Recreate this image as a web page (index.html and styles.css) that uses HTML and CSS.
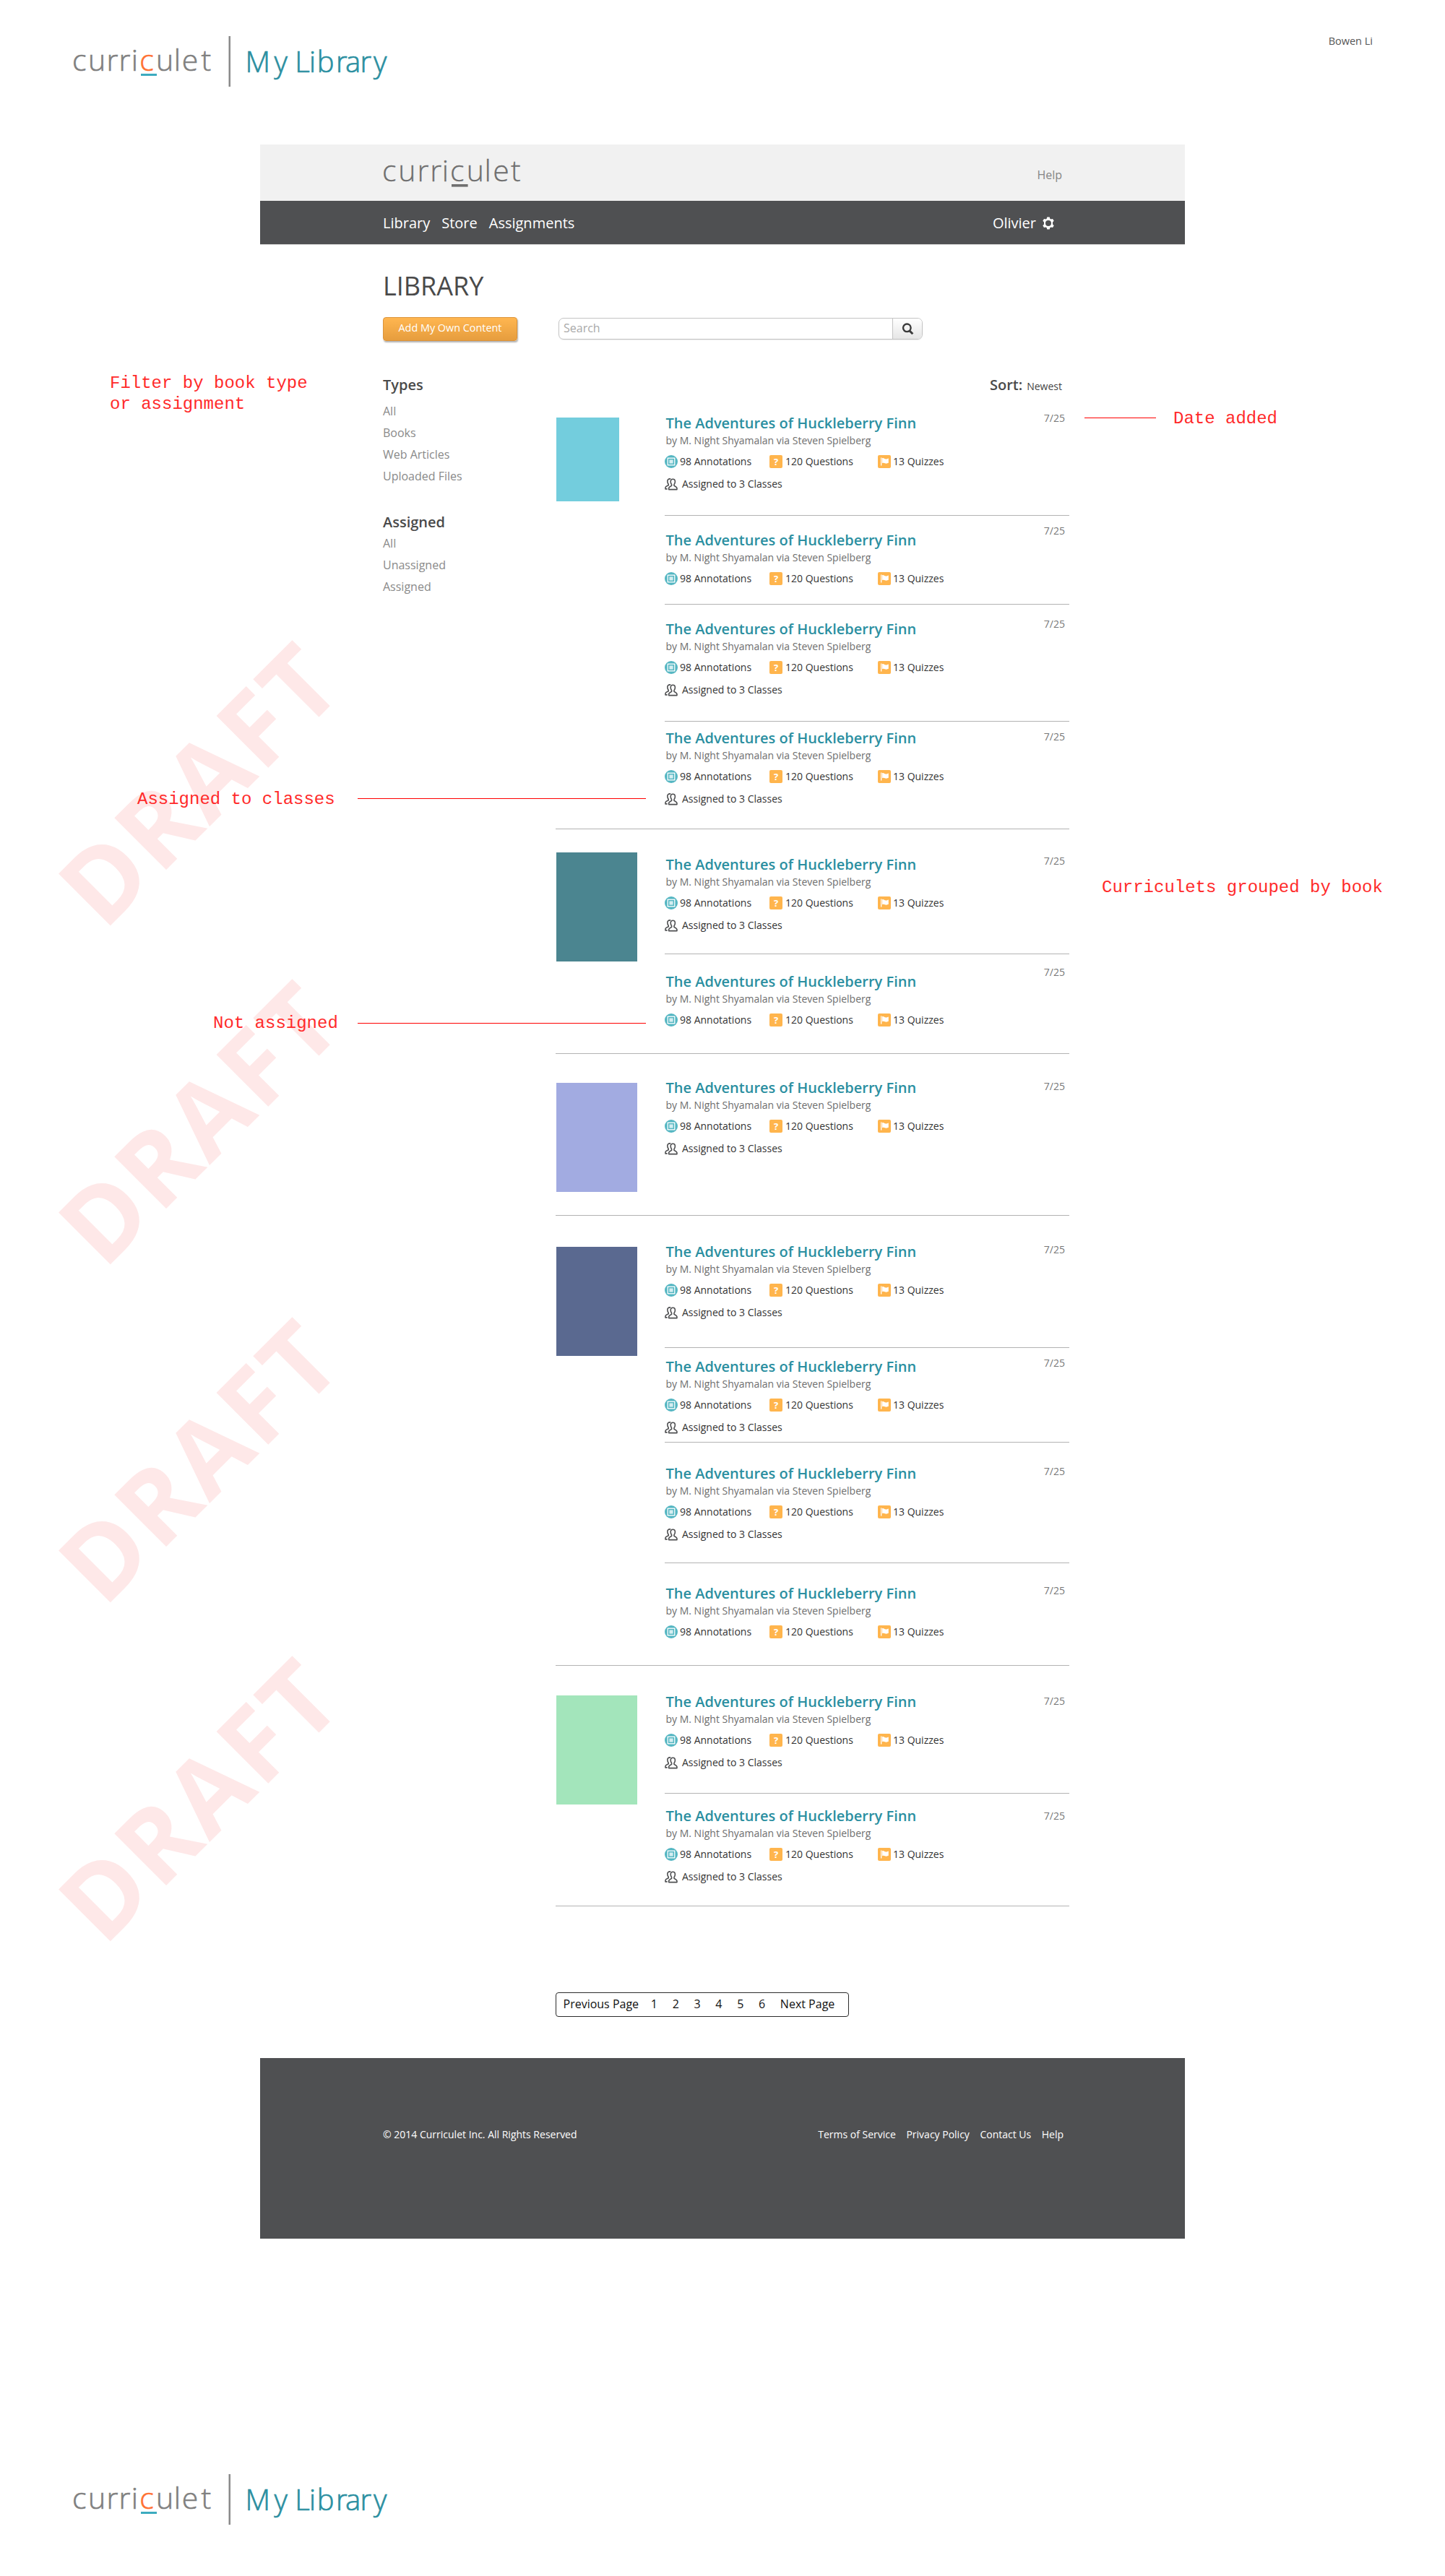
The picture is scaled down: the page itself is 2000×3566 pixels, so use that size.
FILE: index.html
```html
<!DOCTYPE html>
<html lang="en">
<head>
<meta charset="utf-8">
<title>Curriculet – My Library</title>
<link rel="stylesheet" href="styles.css">
</head>
<body>
<svg class="sprite" width="0" height="0" aria-hidden="true">
  <symbol id="note" viewBox="0 0 18 18"><circle cx="9" cy="9" r="9" fill="#54b6c2"/><rect x="4.2" y="4.2" width="9.6" height="9.6" fill="none" stroke="#fff" stroke-width="1.3"/><rect x="6.4" y="6.4" width="5.2" height="5.2" fill="#d5eef1"/></symbol>
  <symbol id="flag" viewBox="0 0 18 18"><rect width="18" height="18" rx="2" fill="#ffb54d"/><path d="M4 3.6h1.3v11H4zM6 4.3c1.9-1 3.200 1.300 5.200 1.200 1.300 0 2.300-.5 3.600-1v6.300c-1.500.7-3.300 1.200-5 .5-1.300-.6-2.400-.8-3.800-.1z" fill="#fff"/></symbol>
  <symbol id="people" viewBox="0 0 18 17"><g fill="none" stroke="#4e4f51" stroke-width="1.6" stroke-linejoin="round"><path d="M11.300 1.200c2 0 3.100 1.500 3.100 3.600 0 1.900-.6 3-1.400 4v1.500c1.800.9 3.600 1.500 3.900 3.200l.1 2.100H5.600l.1-2.100c.3-1.700 2.100-2.300 3.900-3.200V8.800c-.8-1-1.400-2.100-1.400-4 0-2.100 1.100-3.600 3.100-3.600z"/><path d="M8.300 1.100C5.400.300 3.700 2 3.800 4.300c0 1.700.5 2.900 1.400 3.900v1.500C3.300 10.600 1.300 11 1 12.900v2h2.600"/></g></symbol>
  <symbol id="gear" viewBox="0 0 18 18"><path fill="#fff" fill-rule="evenodd" d="M7.300.5h3.400l.6 2.300 1.300.8 2.400-.7 1.700 2.900-1.700 1.700v3l1.700 1.700-1.700 2.900-2.400-.7-1.300.8-.6 2.300H7.300l-.6-2.300-1.300-.8-2.400.7-1.700-2.900L3 10.500v-3L1.300 5.800 3 2.900l2.400.7 1.300-.8zM9 5a4 4 0 1 0 0 8 4 4 0 0 0 0-8z"/></symbol>
</svg>

<header class="brand">
  <svg class="brand-logo" width="460" height="80" viewBox="0 0 460 80">
    <text class="word" y="53" x="0 22 47.500 64.500 81.800 93.200 116 140.800 151.800 178.500">curri<tspan class="accent">c</tspan>ulet</text>
    <rect x="95" y="57" width="22" height="3" fill="#3cabbf"/>
    <rect x="216.500" y="5" width="2.500" height="70" fill="#8a8a8a"/>
    <text class="section" y="54.700" x="239.500 279.500 302 308.300 328 338.700 365 378 398.500 417">My Library</text>
  </svg>
  <span class="author">Bowen Li</span>
</header>

<div class="app">
  <div class="topbar">
    <svg class="app-logo" width="200" height="50" viewBox="0 0 200 50">
      <text class="word" y="36" x="-1 21.300 47.500 65.200 81.800 93 115.700 140.500 152.300 176.900">curriculet</text>
      <rect x="95" y="40" width="22.600" height="3.600" fill="#6f6f6f"/>
    </svg>
    <a class="help">Help</a>
  </div>
  <nav class="nav">
    <div class="nav-links"><a>Library</a><a>Store</a><a>Assignments</a></div>
    <div class="user">Olivier <svg width="18" height="18"><use href="#gear"/></svg></div>
  </nav>

  <main class="content">
    <h1>LIBRARY</h1>
    <div class="tools">
      <button class="add">Add My Own Content</button>
      <div class="search"><span class="search-field">Search</span><span class="search-btn"><svg width="17" height="17" viewBox="0 0 17 17" fill="none" stroke="#3b3b3b"><circle cx="7.300" cy="6.800" r="5.300" stroke-width="2.400"/><path d="M11 11l4.300 4.300" stroke-width="3"/></svg></span></div>
    </div>
    <div class="columns">
      <aside class="filters">
        <h2>Types</h2>
        <ul><li>All</li><li>Books</li><li>Web Articles</li><li>Uploaded Files</li></ul>
        <h2 class="second">Assigned</h2>
        <ul class="tight"><li>All</li><li>Unassigned</li><li>Assigned</li></ul>
      </aside>
      <div class="results">
        <div class="sort"><b>Sort:</b><span>Newest</span></div>

        <section class="group g1"><div class="cover"></div><div class="entries">
          <article class="entry e1"><div class="info"><h3>The Adventures of Huckleberry Finn</h3><p class="by">by M. Night Shyamalan via Steven Spielberg</p><div class="stats"><span><svg><use href="#note"/></svg>98 Annotations</span><span><i class="q">?</i>120 Questions</span><span><svg><use href="#flag"/></svg>13 Quizzes</span></div><p class="classes"><svg><use href="#people"/></svg>Assigned to 3 Classes</p></div><time>7/25</time></article>
          <article class="entry e2"><div class="info"><h3>The Adventures of Huckleberry Finn</h3><p class="by">by M. Night Shyamalan via Steven Spielberg</p><div class="stats"><span><svg><use href="#note"/></svg>98 Annotations</span><span><i class="q">?</i>120 Questions</span><span><svg><use href="#flag"/></svg>13 Quizzes</span></div></div><time>7/25</time></article>
          <article class="entry e3"><div class="info"><h3>The Adventures of Huckleberry Finn</h3><p class="by">by M. Night Shyamalan via Steven Spielberg</p><div class="stats"><span><svg><use href="#note"/></svg>98 Annotations</span><span><i class="q">?</i>120 Questions</span><span><svg><use href="#flag"/></svg>13 Quizzes</span></div><p class="classes"><svg><use href="#people"/></svg>Assigned to 3 Classes</p></div><time>7/25</time></article>
          <article class="entry e4"><div class="info"><h3>The Adventures of Huckleberry Finn</h3><p class="by">by M. Night Shyamalan via Steven Spielberg</p><div class="stats"><span><svg><use href="#note"/></svg>98 Annotations</span><span><i class="q">?</i>120 Questions</span><span><svg><use href="#flag"/></svg>13 Quizzes</span></div><p class="classes"><svg><use href="#people"/></svg>Assigned to 3 Classes</p></div><time>7/25</time></article>
        </div></section>

        <section class="group g2"><div class="cover"></div><div class="entries">
          <article class="entry e5"><div class="info"><h3>The Adventures of Huckleberry Finn</h3><p class="by">by M. Night Shyamalan via Steven Spielberg</p><div class="stats"><span><svg><use href="#note"/></svg>98 Annotations</span><span><i class="q">?</i>120 Questions</span><span><svg><use href="#flag"/></svg>13 Quizzes</span></div><p class="classes"><svg><use href="#people"/></svg>Assigned to 3 Classes</p></div><time>7/25</time></article>
          <article class="entry e6"><div class="info"><h3>The Adventures of Huckleberry Finn</h3><p class="by">by M. Night Shyamalan via Steven Spielberg</p><div class="stats"><span><svg><use href="#note"/></svg>98 Annotations</span><span><i class="q">?</i>120 Questions</span><span><svg><use href="#flag"/></svg>13 Quizzes</span></div></div><time>7/25</time></article>
        </div></section>

        <section class="group g3"><div class="cover"></div><div class="entries">
          <article class="entry e7"><div class="info"><h3>The Adventures of Huckleberry Finn</h3><p class="by">by M. Night Shyamalan via Steven Spielberg</p><div class="stats"><span><svg><use href="#note"/></svg>98 Annotations</span><span><i class="q">?</i>120 Questions</span><span><svg><use href="#flag"/></svg>13 Quizzes</span></div><p class="classes"><svg><use href="#people"/></svg>Assigned to 3 Classes</p></div><time>7/25</time></article>
        </div></section>

        <section class="group g4"><div class="cover"></div><div class="entries">
          <article class="entry e8"><div class="info"><h3>The Adventures of Huckleberry Finn</h3><p class="by">by M. Night Shyamalan via Steven Spielberg</p><div class="stats"><span><svg><use href="#note"/></svg>98 Annotations</span><span><i class="q">?</i>120 Questions</span><span><svg><use href="#flag"/></svg>13 Quizzes</span></div><p class="classes"><svg><use href="#people"/></svg>Assigned to 3 Classes</p></div><time>7/25</time></article>
          <article class="entry e9"><div class="info"><h3>The Adventures of Huckleberry Finn</h3><p class="by">by M. Night Shyamalan via Steven Spielberg</p><div class="stats"><span><svg><use href="#note"/></svg>98 Annotations</span><span><i class="q">?</i>120 Questions</span><span><svg><use href="#flag"/></svg>13 Quizzes</span></div><p class="classes"><svg><use href="#people"/></svg>Assigned to 3 Classes</p></div><time>7/25</time></article>
          <article class="entry e10"><div class="info"><h3>The Adventures of Huckleberry Finn</h3><p class="by">by M. Night Shyamalan via Steven Spielberg</p><div class="stats"><span><svg><use href="#note"/></svg>98 Annotations</span><span><i class="q">?</i>120 Questions</span><span><svg><use href="#flag"/></svg>13 Quizzes</span></div><p class="classes"><svg><use href="#people"/></svg>Assigned to 3 Classes</p></div><time>7/25</time></article>
          <article class="entry e11"><div class="info"><h3>The Adventures of Huckleberry Finn</h3><p class="by">by M. Night Shyamalan via Steven Spielberg</p><div class="stats"><span><svg><use href="#note"/></svg>98 Annotations</span><span><i class="q">?</i>120 Questions</span><span><svg><use href="#flag"/></svg>13 Quizzes</span></div></div><time>7/25</time></article>
        </div></section>

        <section class="group g5"><div class="cover"></div><div class="entries">
          <article class="entry e12"><div class="info"><h3>The Adventures of Huckleberry Finn</h3><p class="by">by M. Night Shyamalan via Steven Spielberg</p><div class="stats"><span><svg><use href="#note"/></svg>98 Annotations</span><span><i class="q">?</i>120 Questions</span><span><svg><use href="#flag"/></svg>13 Quizzes</span></div><p class="classes"><svg><use href="#people"/></svg>Assigned to 3 Classes</p></div><time>7/25</time></article>
          <article class="entry e13"><div class="info"><h3>The Adventures of Huckleberry Finn</h3><p class="by">by M. Night Shyamalan via Steven Spielberg</p><div class="stats"><span><svg><use href="#note"/></svg>98 Annotations</span><span><i class="q">?</i>120 Questions</span><span><svg><use href="#flag"/></svg>13 Quizzes</span></div><p class="classes"><svg><use href="#people"/></svg>Assigned to 3 Classes</p></div><time>7/25</time></article>
        </div></section>

        <div class="pager"><a class="prev">Previous Page</a><a>1</a><a>2</a><a>3</a><a>4</a><a>5</a><a>6</a><a class="next">Next Page</a></div>
      </div>
    </div>
  </main>

  <footer class="footer">
    <span>© 2014 Curriculet Inc. All Rights Reserved</span>
    <div class="footer-links"><a>Terms of Service</a><a>Privacy Policy</a><a>Contact Us</a><a>Help</a></div>
  </footer>
</div>

<div class="brand-bottom">
  <svg class="brand-logo" width="460" height="80" viewBox="0 0 460 80">
    <text class="word" y="53" x="0 22 47.500 64.500 81.800 93.200 116 140.800 151.800 178.500">curri<tspan class="accent">c</tspan>ulet</text>
    <rect x="95" y="57" width="22" height="3" fill="#3cabbf"/>
    <rect x="216.500" y="5" width="2.500" height="70" fill="#8a8a8a"/>
    <text class="section" y="54.700" x="239.500 279.500 302 308.300 328 338.700 365 378 398.500 417">My Library</text>
  </svg>
</div>

<!-- review notes and watermarks laid over the mockup -->
<div class="draft d1">DRAFT</div>
<div class="draft d2">DRAFT</div>
<div class="draft d3">DRAFT</div>
<div class="draft d4">DRAFT</div>
<div class="note n1">Filter by book type<br>or assignment</div>
<div class="note n2">Date added</div><i class="lead l2"></i>
<div class="note n3">Assigned to classes</div><i class="lead l3"></i>
<div class="note n4">Curriculets grouped by book</div>
<div class="note n5">Not assigned</div><i class="lead l5"></i>
</body>
</html>
```
FILE: styles.css
```css
* { box-sizing: border-box; margin: 0; padding: 0; }
body {
  position: relative;
  width: 2000px;
  height: 3566px;
  overflow: hidden;
  background: #fff;
  color: #333;
  font-family: "Open Sans", "Noto Sans", sans-serif;
  font-size: 14px;
}
.sprite { position: absolute; }
ul { list-style: none; }

/* page brand */
.brand { display: flex; justify-content: space-between; height: 200px; padding: 45px 100px 0 100px; }
.brand-bottom { padding: 321px 0 0 100px; }
.brand-logo, .app-logo { display: block; overflow: visible; }
.word { font-size: 41px; font-weight: 300; fill: #808080; stroke: #808080; stroke-width: .6px; }
.word .accent { fill: #ff7133; stroke: #ff7133; }
.section { font-size: 40px; font-weight: 300; fill: #2b8fa1; stroke: #2b8fa1; stroke-width: .7px; }
.author { font-size: 14.500px; line-height: 20px; color: #555; margin-top: 2px; }

/* app frame */
.app { width: 1280px; margin: 0 auto; }
.topbar { display: flex; justify-content: space-between; height: 78px; padding: 15px 170px 0; background: #f1f1f1; }
.app-logo .word { fill: #6f6f6f; stroke: #6f6f6f; stroke-width: .3px; }
.help { font-size: 16px; line-height: 24px; color: #858585; margin-top: 15px; }
.nav { display: flex; justify-content: space-between; align-items: center; height: 61px; padding: 0 180px 0 170px; background: #4f5052; border-bottom: 1px solid #d4d4d4; color: #fff; font-size: 20px; line-height: 28px; }
.nav-links { display: flex; gap: 16px; padding-top: 2px; }
.user { display: flex; align-items: center; gap: 8px; padding-top: 1px; }

.content { height: 2510px; padding: 0 160px 0 170px; }
h1 { padding-top: 32px; height: 100px; font-size: 36px; font-weight: 400; line-height: 50px; color: #4a4a4a; }
.tools { display: flex; gap: 57px; height: 80px; }
.add { width: 186px; height: 33px; border: 1px solid #dc943a; border-radius: 4px; background: linear-gradient(#ffb650, #e69d3e); box-shadow: 1px 2px 2px rgba(0,0,0,.3); color: #fff; font: 14.400px/20px "Open Sans", "Noto Sans", sans-serif; padding-bottom: 3px; }
.search { display: flex; width: 504px; height: 30px; margin-top: 1px; border: 1px solid #c4c4c4; border-radius: 7px; overflow: hidden; box-shadow: 0 1px 1px rgba(0,0,0,.08); }
.search-field { flex: 1; padding-left: 6px; font-size: 16px; line-height: 26px; color: #a9a9a9; }
.search-btn { display: flex; align-items: center; justify-content: center; width: 41px; border-left: 1px solid #c4c4c4; background: linear-gradient(#fff, #e6e6e6); }

.columns { display: flex; }
.filters { width: 239px; }
.filters h2, .sort b { font-size: 20px; font-weight: 600; line-height: 28px; color: #4a4a4a; }
.filters ul { margin-top: 7px; }
.filters li { font-size: 16px; line-height: 30px; color: #8a8a8a; }
.filters .second { margin-top: 35px; }
.filters .tight { margin-top: 0; }

.results { width: 711px; }
.sort { display: flex; gap: 6px; align-items: baseline; justify-content: flex-end; height: 41px; padding-right: 10px; line-height: 28px; color: #444; }

.group { display: flex; border-bottom: 1px solid #b3b3b3; }
.cover { width: 112px; height: 151px; margin: 0 38px 0 1px; flex: none; }
.g1 .cover { width: 87px; height: 116px; margin: 18px 63px 0 1px; background: #73cddd; }
.g2 .cover { margin-top: 32px; background: #4b8590; }
.g3 .cover { margin-top: 40px; background: #a2abe1; }
.g4 .cover { margin-top: 43px; background: #5a6990; }
.g5 .cover { margin-top: 41px; background: #a3e5bb; }
.entries { width: 560px; }
.entry { display: flex; justify-content: space-between; align-items: flex-start; border-bottom: 1px solid #b3b3b3; }
.entry:last-child { border-bottom: 0; }
.entry .info { margin-top: var(--title); }
.entry time { margin: var(--date) 6px 0 0; line-height: 20px; color: #777; }
.entry h3 { padding-left: 1.500px; font-size: 20px; font-weight: 600; line-height: 28px; color: #2b8fa1; white-space: nowrap; }
.by { padding-left: 1.500px; line-height: 20px; color: #6e6e6e; }
.stats { display: grid; grid-template-columns: 145px 150px auto; margin-top: 10px; line-height: 18px; }
.stats span, .classes { display: flex; align-items: center; color: #333; }
.stats svg { width: 18px; height: 18px; margin-right: 3px; }
.classes { margin-top: 13px; line-height: 18px; }
.classes svg { width: 18px; height: 17px; margin-right: 6px; }
.q { width: 18px; height: 18px; margin-right: 4px; border-radius: 2px; background: #ffb54d; color: #fff; font-size: 13px; font-style: normal; font-weight: 700; line-height: 18px; text-align: center; }

/* each entry sits at its own height in the mockup */
.e1 { --title: 12px; --date: 9px; height: 154px; }
.e2 { --title: 20px; --date: 11px; height: 123px; }
.e3 { --title: 20px; --date: 17px; height: 162px; }
.e4 { --title: 9px; --date: 11px; height: 148px; }
.e5 { --title: 35px; --date: 34px; height: 173px; }
.e6 { --title: 24px; --date: 15px; height: 137px; }
.e7 { --title: 33px; --date: 35px; height: 223px; }
.e8 { --title: 36px; --date: 37px; height: 183px; }
.e9 { --title: 12px; --date: 11px; height: 131px; }
.e10 { --title: 29px; --date: 30px; height: 167px; }
.e11 { --title: 28px; --date: 28px; height: 141px; }
.e12 { --title: 36px; --date: 39px; height: 177px; }
.e13 { --title: 17px; --date: 21px; height: 155px; }

.pager { display: flex; gap: 20.700px; width: 406px; height: 34px; margin-top: 119px; padding-left: 9.500px; border: 1px solid #2c2c2c; border-radius: 4px; font-size: 16px; line-height: 31px; color: #111; white-space: nowrap; }
.pager .prev { margin-right: -4px; }

.footer { display: flex; justify-content: space-between; height: 250px; padding: 96px 168px 0 170px; background: #4f5052; color: #fff; line-height: 20px; }
.footer-links { display: flex; gap: 14.500px; }

/* review notes */
.draft { position: absolute; left: 152.700px; z-index: -1; font-size: 142px; font-weight: 700; line-height: 142px; color: #fee8e8; white-space: nowrap; transform-origin: 13px 126px; transform: rotate(-45deg); margin: -126px 0 0 -13px; letter-spacing: 4px; }
.d1 { top: 1280.700px; }
.d2 { top: 1749.700px; }
.d3 { top: 2217.700px; }
.d4 { top: 2686.700px; }
.note { position: absolute; font: 24px/29px "Liberation Mono", monospace; color: #ff2a2a; white-space: nowrap; }
.n1 { left: 152px; top: 516px; }
.n2 { left: 1624px; top: 565px; }
.n3 { left: 190px; top: 1092px; }
.n4 { left: 1525px; top: 1214px; }
.n5 { left: 295px; top: 1402px; }
.lead { position: absolute; height: 1px; background: #f00; }
.l2 { left: 1501px; top: 578px; width: 99px; }
.l3 { left: 495px; top: 1105px; width: 399px; }
.l5 { left: 495px; top: 1416px; width: 399px; }
```
